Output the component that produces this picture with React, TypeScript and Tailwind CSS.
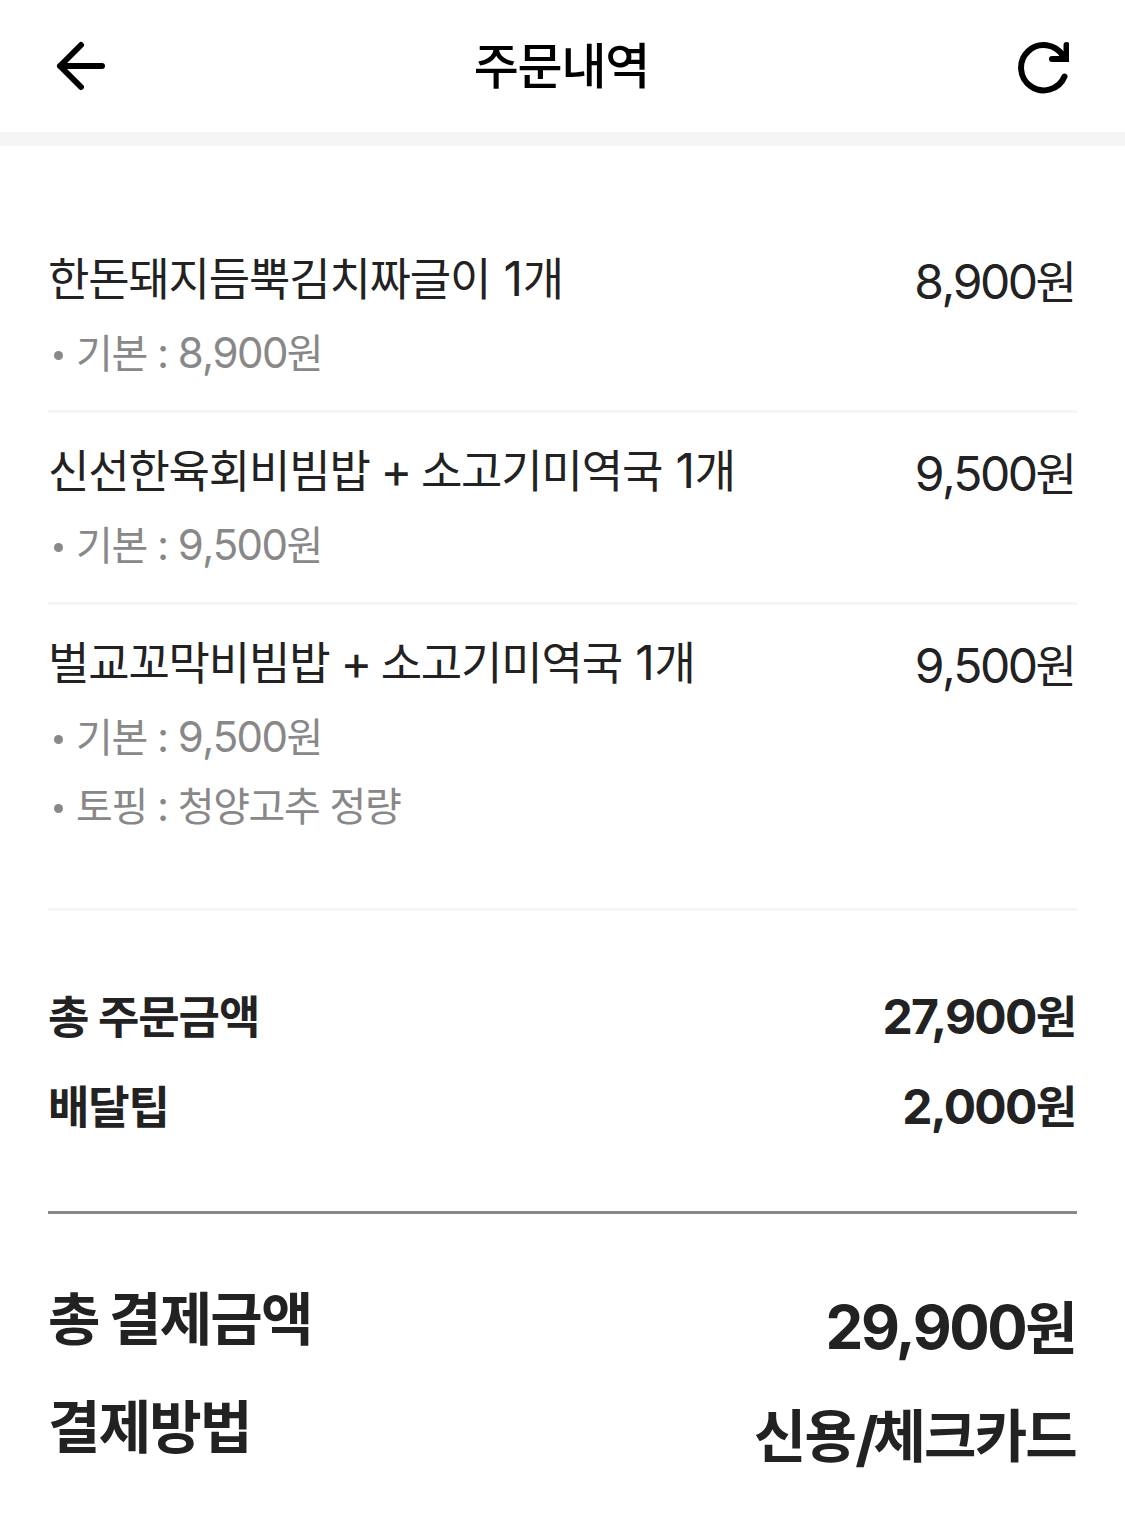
const items = [
  { name: "한돈돼지듬뿍김치짜글이 1개", price: "8,900원", options: ["기본 : 8,900원"] },
  { name: "신선한육회비빔밥 + 소고기미역국 1개", price: "9,500원", options: ["기본 : 9,500원"] },
  { name: "벌교꼬막비빔밥 + 소고기미역국 1개", price: "9,500원", options: ["기본 : 9,500원", "토핑 : 청양고추 정량"] },
];

type Size = "title" | "name" | "price" | "option" | "sum" | "total";

// Hangul, Latin and symbol runs have separate sizes and tracking.
const hangul: Record<Size, string> = {
  title: "text-[49px] tracking-[-1.2px]",
  name: "text-[45px] tracking-[-1.2px]",
  price: "text-[45px] tracking-[-1px]",
  option: "text-[40px] tracking-[-1.4px]",
  sum: "text-[45px] tracking-[-1.1px]",
  total: "text-[57px] tracking-[-1.8px]",
};
const latin: Record<Size, string> = {
  title: "text-[48px]",
  name: "text-[48px] tracking-[-0.2px]",
  price: "text-[48px] tracking-[-2.5px] [font-kerning:none]",
  option: "text-[42px] tracking-[-1.6px] [font-kerning:none]",
  sum: "text-[48px] tracking-[-1.7px]",
  total: "text-[60px] tracking-[-2.4px]",
};

function runClass(run: string, size: Size) {
  if (/[가-힣]/.test(run)) return hangul[size];
  if (run === " + ") return "text-[48px] tracking-[-2.5px]";
  if (run === "/") return "text-[60px] tracking-[-5px] align-[-4px] leading-none";
  if (run === " " && size === "total") return "text-[60px] tracking-[-3.8px]";
  return latin[size];
}

function Label({ text, size }: { text: string; size: Size }) {
  return (
    <span className="whitespace-pre">
      {(text.match(/[가-힣]+|[^가-힣]+/g) ?? []).map((run, i) => (
        <span key={i} className={runClass(run, size)}>{run}</span>
      ))}
    </span>
  );
}

export default function App() {
  return (
    <div className="min-h-[1529px] w-full bg-white font-['Inter','Noto_Sans_CJK_KR',sans-serif] text-[#222] whitespace-nowrap">
      <header className="flex h-[146px] items-start justify-between border-b-[14px] border-[#f5f5f5] px-[56px] pt-[40px] text-black">
        <svg width="50" height="52" viewBox="0 0 50 52" fill="none" stroke="currentColor" strokeWidth="6" strokeLinecap="round" strokeLinejoin="round">
          <path d="M25 5 4 26l21 21M4 26h42" />
        </svg>
        <h1 className="text-[48px] leading-[53px] font-medium"><Label text="주문내역" size="title" /></h1>
        <svg width="52" height="56" viewBox="0 0 52 56" fill="none" stroke="currentColor" strokeWidth="6" strokeLinecap="round" strokeLinejoin="miter">
          <path d="M47.5 36.5A22.6 22.6 0 1 1 46 16M49.5 5v14H35" />
        </svg>
      </header>
      <main className="px-[48px] pt-[75px]">
        {items.map((item, i) => (
          <section key={item.name} className={i === 2 ? "h-[306px] border-b-[3px] border-[#f5f5f5] pt-[25px]" : "h-[192px] border-b-[3px] border-[#f5f5f5] pt-[25px]"}>
            <div className="flex justify-between">
              <h2 className="text-[45px] leading-[66px] font-normal"><Label text={item.name} size="name" /></h2>
              <span className="pt-[3px] pr-px text-[48px] leading-[66px]"><Label text={item.price} size="price" /></span>
            </div>
            <ul className="pt-[2px] text-[42px] text-[#888]">
              {item.options.map((o) => (
                <li key={o} className="flex h-[69px] items-center gap-[13px] pl-[6px]">
                  <i className="mt-[6px] size-[9px] rounded-full bg-[#888]" />
                  <Label text={o} size="option" />
                </li>
              ))}
            </ul>
          </section>
        ))}
        <section className="flex h-[303px] flex-col border-b-[3px] border-[#888] pt-[61px] text-[48px] font-bold">
          <div className="flex h-[90px] items-center justify-between pr-px"><Label text="총 주문금액" size="sum" /><Label text="27,900원" size="sum" /></div>
          <div className="flex h-[90px] items-center justify-between pr-px"><Label text="배달팁" size="sum" /><Label text="2,000원" size="sum" /></div>
        </section>
        <section className="pt-[50px] text-[60px] font-bold">
          <div className="flex h-[108px] items-center justify-between"><Label text="총 결제금액" size="total" /><span className="pt-[18px] pr-px"><Label text="29,900원" size="total" /></span></div>
          <div className="flex h-[108px] items-center justify-between"><Label text="결제방법" size="total" /><span className="pt-[18px] pr-px"><Label text="신용/체크카드" size="total" /></span></div>
        </section>
      </main>
    </div>
  );
}
